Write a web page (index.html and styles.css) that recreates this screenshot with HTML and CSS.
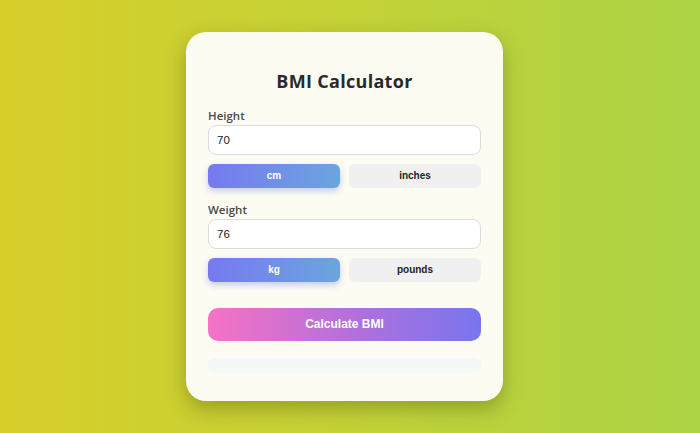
FILE: index.html
```html
<!DOCTYPE html>
<html>
<head>
<meta charset="utf-8">
<link rel="stylesheet" href="styles.css">
</head>
<body>
<div class="card">
  <h1 class="title">BMI Calculator</h1>
  <div class="group">
    <label class="label">Height</label>
    <input class="field" type="text" value="70">
    <div class="toggles">
      <button class="tog active">cm</button>
      <button class="tog">inches</button>
    </div>
  </div>
  <div class="group">
    <label class="label">Weight</label>
    <input class="field" type="text" value="76">
    <div class="toggles">
      <button class="tog active">kg</button>
      <button class="tog">pounds</button>
    </div>
  </div>
  <button class="calc">Calculate BMI</button>
  <div class="result"></div>
</div>
</body>
</html>
```
FILE: styles.css
```css
html, body {
  margin: 0;
  height: 100%;
}
body {
  background: linear-gradient(90deg, #d7ce2a 0%, #c4d237 50%, #acd446 100%);
  display: flex;
  align-items: center;
  justify-content: center;
  padding-right: 11px;
  box-sizing: border-box;
  font-family: "Open Sans", "Noto Sans", sans-serif;
}
.card {
  width: 273px;
  height: 332px;
  padding: 37px 22px 0 22px;
  background: #fcfcf2;
  border-radius: 20px;
  box-shadow: 0 8px 20px rgba(60, 70, 0, 0.35);
  display: flex;
  flex-direction: column;
  margin-bottom: 1px;
}
.title {
  margin: 0 0 14px 0;
  font-size: 18px;
  line-height: 24px;
  font-weight: 700;
  color: #2a2a2a;
  text-align: center;
  letter-spacing: 0.3px;
}
.group {
  display: flex;
  flex-direction: column;
  margin-bottom: 13px;
}
.group + .group {
  margin-bottom: 26px;
}
.label {
  font-size: 11.5px;
  line-height: 17px;
  font-weight: 600;
  color: #4a4a4a;
  margin-bottom: 1px;
}
.field {
  box-sizing: border-box;
  height: 30px;
  width: 100%;
  border: 1px solid #dcdcdc;
  border-radius: 8px;
  background: #fff;
  padding: 0 8px;
  font-family: "Liberation Sans", Arial, sans-serif;
  font-size: 11.5px;
  color: #222;
  outline: none;
}
.toggles {
  display: grid;
  grid-template-columns: 1fr 1fr;
  gap: 9px;
  margin-top: 9px;
}
.tog {
  height: 24px;
  border: none;
  border-radius: 6px;
  background: #f0f0f0;
  font-family: "Liberation Sans", Arial, sans-serif;
  font-weight: 700;
  font-size: 10px;
  color: #222;
  padding: 0;
}
.tog.active {
  background: linear-gradient(90deg, #7779f0 0%, #6aa6de 100%);
  color: #fff;
  box-shadow: 0 3px 6px rgba(100, 110, 220, 0.35);
}
.calc {
  height: 33px;
  border: none;
  border-radius: 10px;
  background: linear-gradient(90deg, #f672c4 0%, #b070dc 55%, #7875ef 100%);
  color: #fff;
  font-family: "Liberation Sans", Arial, sans-serif;
  font-weight: 700;
  font-size: 12px;
  padding: 0;
}
.result {
  margin-top: 17px;
  height: 16px;
  border-radius: 6px;
  background: linear-gradient(180deg, #f3f5f8 0%, #f8faf5 100%);
}
```
